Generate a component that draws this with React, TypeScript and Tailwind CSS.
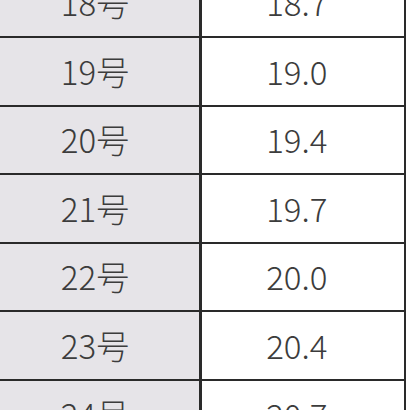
import React from 'react';

const rows = [
  ['18号', '18.7'],
  ['19号', '19.0'],
  ['20号', '19.4'],
  ['21号', '19.7'],
  ['22号', '20.0'],
  ['23号', '20.4'],
  ['24号', '20.7'],
];

const App: React.FC = () => {
  return (
    <div className="w-[410px] h-[410px] overflow-hidden bg-white" style={{ fontFamily: '"Noto Sans CJK JP", "Noto Sans", sans-serif' }}>
      <div className="mt-[-30.6px] w-[406px] flex flex-col border-r-[2.5px] border-[#2a2a2a]">
        {rows.map(([size, val]) => (
          <div key={size} className="flex h-[68.6px] border-b-[2.5px] border-[#2a2a2a] text-[33px] font-light text-[#3c3c3c]">
            <div className="w-[199px] bg-[#e6e4e8] flex items-center justify-center pr-[9px]">{size}</div>
            <div className="w-[2.5px] bg-[#2a2a2a]" />
            <div className="flex-1 bg-white flex items-center justify-center pr-[12px]">{val}</div>
          </div>
        ))}
      </div>
    </div>
  );
};

export default App;
